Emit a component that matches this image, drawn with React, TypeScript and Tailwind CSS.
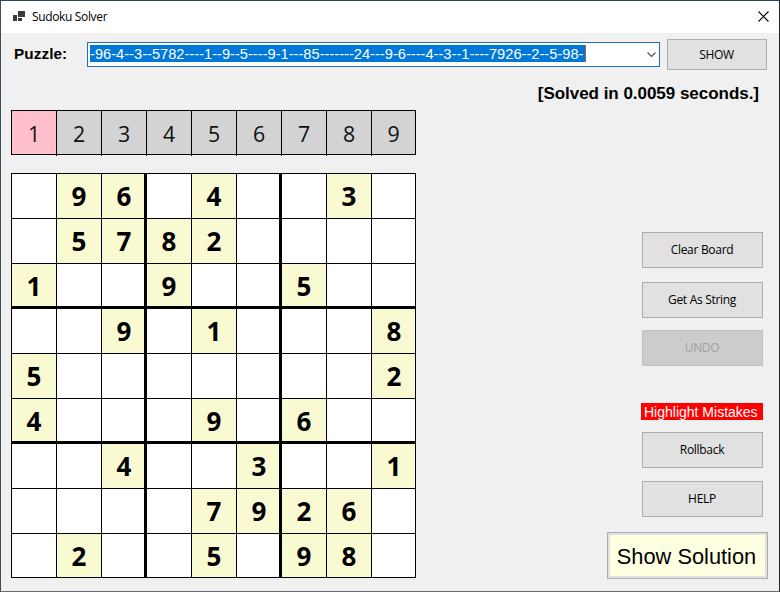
import type { ReactNode } from 'react';

const PUZZLE =
  '-96-4--3--5782----1--9--5----9-1---85-------24---9-6----4--3--1----7926--2--5-98-';

const SEGOE = 'font-["Open_Sans","Noto_Sans",sans-serif]';
const ARIAL = 'font-["Liberation_Sans",Arial,sans-serif]';

function TitleBar() {
  return (
    <header className="flex h-8 shrink-0 items-center bg-white pl-3 pr-[10px]">
      <svg width="12" height="12" viewBox="0 0 12 12" shapeRendering="crispEdges" className="-mt-px">
        <rect x="0" y="4" width="4" height="6" fill="#3c3c3c" />
        <rect x="5" y="0" width="7" height="6" fill="#3c3c3c" />
        <rect x="5" y="7" width="4" height="3" fill="#3c3c3c" />
      </svg>
      <span className={`ml-[7px] whitespace-nowrap text-[12px] leading-4 tracking-[-0.35px] text-black ${SEGOE}`}>
        Sudoku Solver
      </span>
      <svg className="-mt-px ml-auto" width="11" height="11" viewBox="0 0 11 11" stroke="#000" strokeWidth="1.1">
        <path d="M.5 .5 10.5 10.5M10.5 .5 .5 10.5" />
      </svg>
    </header>
  );
}

function FormButton({
  children,
  disabled = false,
  className = 'pb-px',
}: {
  children: ReactNode;
  disabled?: boolean;
  className?: string;
}) {
  return (
    <button
      disabled={disabled}
      className={`flex shrink-0 items-center justify-center whitespace-nowrap border pr-px text-[12px] leading-4 tracking-[-0.3px] ${SEGOE} ${
        disabled ? 'border-[#bfbfbf] bg-[#cccccc] text-[#a0a0a0]' : 'border-[#adadad] bg-[#e1e1e1] text-black'
      } ${className}`}
    >
      {children}
    </button>
  );
}

function DigitPicker() {
  return (
    <div className="flex h-[46px] w-[405px]">
      {[1, 2, 3, 4, 5, 6, 7, 8, 9].map((n) => (
        <div key={n} className="flex h-[46px] w-[45px]">
          <div className={`w-px shrink-0 bg-black ${n === 1 ? 'h-[45px]' : 'h-[46px]'}`} />
          <div
            className={`flex h-[45px] flex-1 items-center justify-center border-y border-black pt-[2px] text-[21.33px] text-[#111] ${SEGOE} ${
              n === 1 ? 'bg-[#ffc0cb]' : 'bg-[#d3d3d3]'
            } ${n === 9 ? 'border-r' : ''}`}
          >
            {n}
          </div>
        </div>
      ))}
    </div>
  );
}

function Board() {
  return (
    <div className="grid h-[405px] w-[405px] grid-cols-9 grid-rows-9">
      {PUZZLE.split('').map((ch, i) => {
        const col = i % 9;
        const row = Math.floor(i / 9);
        const right = col === 2 || col === 5 ? 'border-r-2' : col === 8 ? 'border-r' : '';
        const bottom = row === 2 || row === 5 ? 'border-b-2' : row === 8 ? 'border-b' : '';
        return (
          <div
            key={i}
            className={`flex h-[45px] w-[45px] items-start justify-start border-l border-t border-black ${right} ${bottom} ${
              ch === '-' ? 'bg-white' : 'bg-[#fafad2]'
            }`}
          >
            <span className={`w-[44px] shrink-0 text-center text-[26px] font-bold leading-[44px] text-black ${SEGOE}`}>
              {ch === '-' ? '' : ch}
            </span>
          </div>
        );
      })}
    </div>
  );
}

export default function App() {
  return (
    <div className="h-[592px] w-[780px] overflow-hidden border border-l-[#35505f] border-t-[#26485a] border-r-[#20262f] border-b-[#6b6b6b] bg-[#f0f0f0]">
      <div className="flex h-full flex-col">
        <TitleBar />
        <div className="flex h-[37px] shrink-0 items-start pl-[13px] pr-3 pt-1.5">
          <label className={`mt-[7px] w-[73px] shrink-0 whitespace-nowrap text-[15.3px] font-bold leading-4 tracking-[0.08px] text-black ${ARIAL}`}>
            Puzzle:
          </label>
          <div className="mt-[3px] flex h-[25px] w-[573px] shrink-0 items-start border border-[#1f6fb5] bg-white pl-0.5 pt-0.5">
            <span className={`block h-[17px] w-[495px] shrink-0 overflow-hidden whitespace-nowrap bg-[#0078d7] text-[14.67px] leading-[18px] text-white ${ARIAL}`}>
              {PUZZLE}
            </span>
            <span className="h-[17px] w-px shrink-0 bg-[#a0643a]" />
            <svg className="ml-auto mr-[3px] mt-[7px]" width="9" height="6" viewBox="0 0 9 6" fill="none" stroke="#505050" strokeWidth="1.1">
              <path d="M.5 .5 4.5 4.5 8.5 .5" />
            </svg>
          </div>
          <FormButton className="ml-[7px] h-[31px] w-[100px] pt-px">SHOW</FormButton>
        </div>
        <div className="flex flex-1 justify-between pl-2.5">
          <main className="flex flex-col gap-[17px] pt-10">
            <DigitPicker />
            <Board />
          </main>
          <aside className="flex flex-col items-end pr-4 pt-[15px]">
            <div className={`mr-[4px] whitespace-nowrap text-[17px] font-bold leading-[18px] tracking-[-0.03px] text-black ${ARIAL}`}>
              [Solved in 0.0059 seconds.]
            </div>
            <FormButton className="mt-[129px] h-9 w-[121px] pb-px">Clear Board</FormButton>
            <FormButton className="mt-3.5 h-9 w-[121px] pb-px">Get As String</FormButton>
            <FormButton disabled className="mt-3 h-9 w-[121px] pb-px">
              UNDO
            </FormButton>
            <div className={`mt-[37px] h-[17px] w-[122px] whitespace-nowrap bg-[#ff0000] pl-[3px] text-[14px] leading-[18px] text-white ${ARIAL}`}>
              Highlight Mistakes
            </div>
            <FormButton className="mt-3 h-9 w-[121px] pb-px">Rollback</FormButton>
            <FormButton className="mt-[13px] h-9 w-[121px] pb-px">HELP</FormButton>
            <button className="-mr-[5px] mt-[15px] flex h-[47px] w-[161px] border border-[#adadad] bg-[#e1e1e1] p-0.5">
              <span className={`flex h-full w-full items-center justify-center whitespace-nowrap bg-[#ffffe1] pr-0.5 pt-[3px] text-[21.8px] text-black ${ARIAL}`}>
                Show Solution
              </span>
            </button>
          </aside>
        </div>
      </div>
    </div>
  );
}
